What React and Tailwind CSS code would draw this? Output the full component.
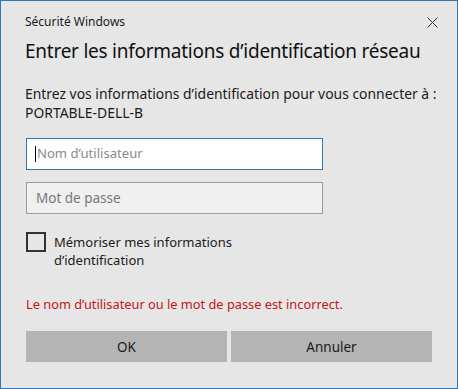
import React from "react";

export default function App() {
  return (
    <div
      className="w-[458px] h-[389px] bg-[#e6e6e6] border border-[#2b79b6] flex flex-col text-[#1a1a1a]"
      style={{ fontFamily: '"Noto Sans", "Open Sans", sans-serif' }}
    >
      {/* title bar */}
      <div className="flex items-center justify-between pl-[24px] pr-[18px] pt-[11px] h-[31px]">
        <span className="text-[12px] text-[#1a1a1a]">Sécurité Windows</span>
        <svg width="11" height="11" viewBox="0 0 11 11" className="mr-[1px]">
          <path d="M0.5 0.5 L10.5 10.5 M10.5 0.5 L0.5 10.5" stroke="#333" strokeWidth="1" />
        </svg>
      </div>

      <h1 className="pl-[24px] mt-[5px] text-[19px] leading-[28px] font-normal tracking-[-0.25px] text-[#111]">
        Entrer les informations d’identification réseau
      </h1>

      <div className="pl-[24px] mt-[19px] text-[13.9px] leading-[19px]">
        <div>Entrez vos informations d’identification pour vous connecter à :</div>
        <div>PORTABLE-DELL-B</div>
      </div>

      <div className="pl-[25px] mt-[16px] flex flex-col gap-[12px]">
        <div className="w-[297px] h-[32px] bg-white border border-[#2b79b6] flex items-center pl-[8px] text-[13.1px] text-[#8a8a8a]">
          <span className="w-[1px] h-[16px] bg-black mr-[1px]" />
          Nom d’utilisateur
        </div>
        <div className="w-[297px] h-[32px] bg-[#f0f0f0] border border-[#9a9a9a] flex items-center pl-[9px] text-[13.5px] text-[#777]">
          Mot de passe
        </div>
      </div>

      <div className="pl-[25px] mt-[18px] flex items-start gap-[8px]">
        <div className="w-[20px] h-[20px] border-2 border-[#333] shrink-0" />
        <div className="text-[13px] leading-[18px] mt-[1px]">
          Mémoriser mes informations
          <br />
          d’identification
        </div>
      </div>

      <div className="pl-[25px] mt-[26px] text-[12.8px] text-[#c4141a]">
        Le nom d’utilisateur ou le mot de passe est incorrect.
      </div>

      <div className="pl-[25px] mt-[17px] flex gap-[4px]">
        <button className="w-[201px] h-[31px] bg-[#b4b4b4] text-[13.5px] text-[#1a1a1a]">OK</button>
        <button className="w-[201px] h-[31px] bg-[#b4b4b4] text-[13.5px] text-[#1a1a1a]">Annuler</button>
      </div>
    </div>
  );
}
